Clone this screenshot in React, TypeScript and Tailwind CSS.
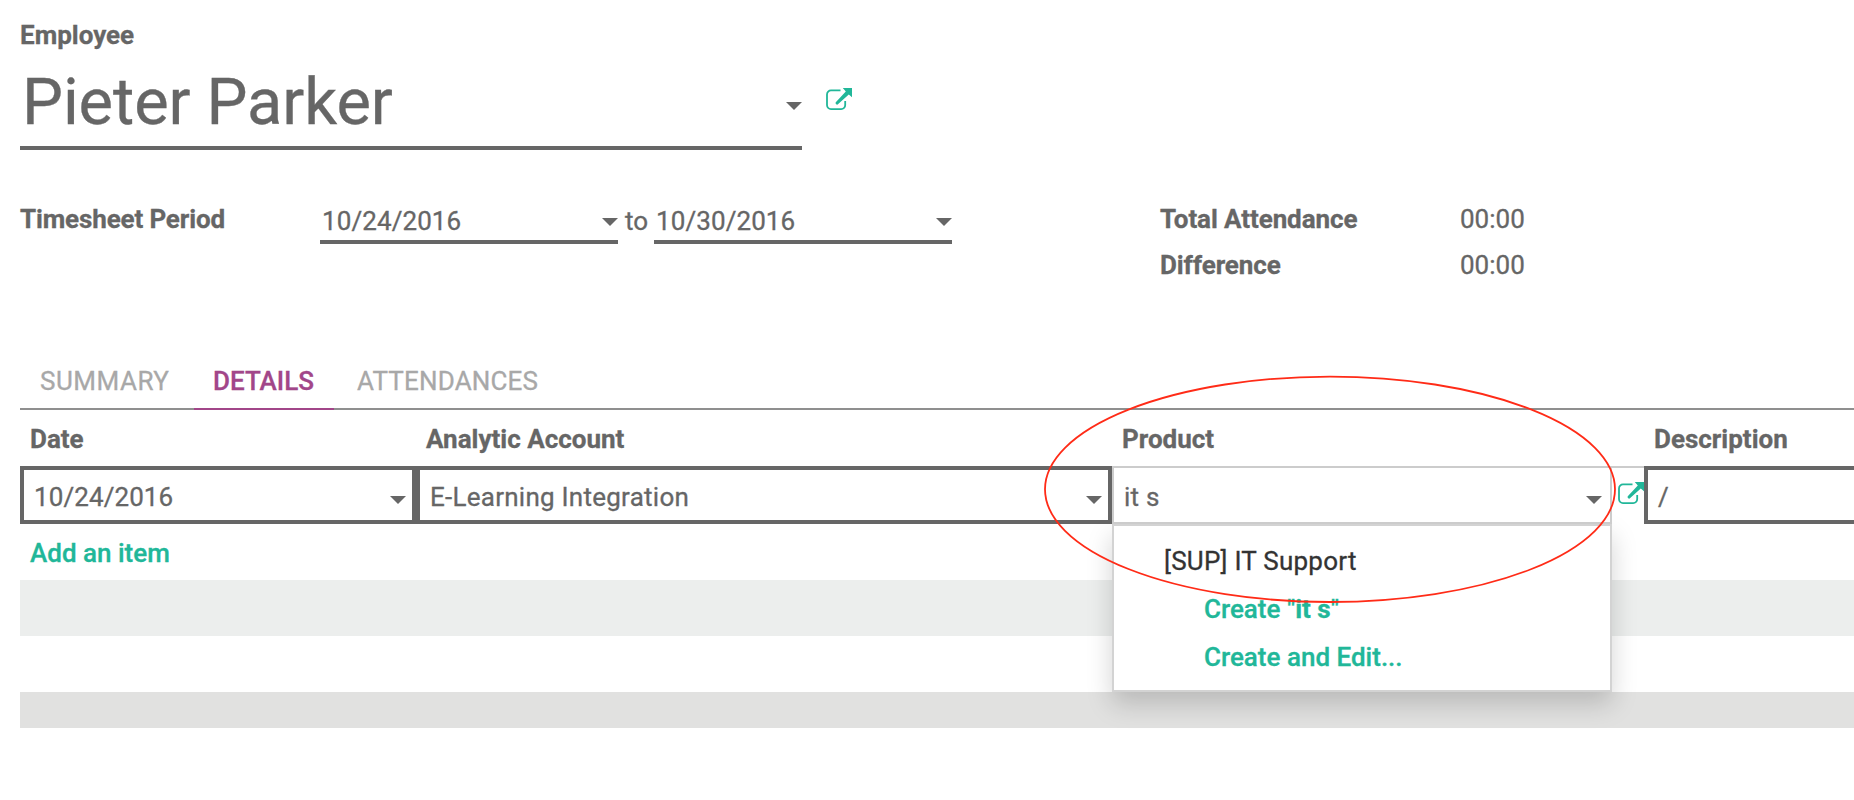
import type { ReactNode } from 'react';

function Caret() {
  return (
    <svg width="16" height="8" viewBox="0 0 16 8" className="block shrink-0 fill-[#666666]">
      <path d="M0 0H16L8 8Z" />
    </svg>
  );
}

function ExternalLink() {
  return (
    <svg width="28" height="24" viewBox="0 0 28 24" className="block shrink-0">
      <path
        d="M15.5 3.4H6a4 4 0 0 0-4 4v10.7a4 4 0 0 0 4 4h10.2a4 4 0 0 0 4-4V14"
        fill="none"
        stroke="#21b799"
        strokeWidth="1.8"
      />
      <path d="M17.8 1H27V10.2L23.8 7.4L13.2 17.1A1.5 1.5 0 0 1 11 14.9L20.8 4.4Z" fill="#21b799" />
    </svg>
  );
}

function DateField({ value }: { value: string }) {
  return (
    <div className="flex h-[41px] w-[298px] items-start justify-between border-b-4 border-[#666666] pl-0.5">
      <span className="tracking-[0.09px]">{value}</span>
      <span className="pt-[15px]">
        <Caret />
      </span>
    </div>
  );
}

function Cell({ className, children }: { className: string; children: ReactNode }) {
  return <div className={`flex h-[58px] shrink-0 items-start justify-between ${className}`}>{children}</div>;
}

export default function App() {
  return (
    <main className="relative h-[800px] w-[1854px] overflow-hidden bg-white pl-5 font-['Roboto',sans-serif] text-[26px] leading-9 text-[#666666] [-webkit-text-stroke:0.3px]">
      <section className="h-[150px] pt-[17px]">
        <div className="font-bold">Employee</div>
        <div className="flex">
          <div className="flex h-[97px] w-[782px] justify-between border-b-4 border-[#666666] pl-0.5">
            <span className="pt-[9px] text-[65px] leading-[80px] tracking-[-0.1px]">Pieter Parker</span>
            <span className="pt-[49px]">
              <Caret />
            </span>
          </div>
          <div className="pt-[34px] pl-[23px]">
            <ExternalLink />
          </div>
        </div>
      </section>

      <section className="flex h-[210px] pt-[50px]">
        <div className="w-[300px] pt-[1px] font-bold tracking-[-0.14px]">Timesheet Period</div>
        <div className="flex w-[840px] pt-[3px]">
          <DateField value="10/24/2016" />
          <span className="w-9 pl-[7px]">to</span>
          <DateField value="10/30/2016" />
        </div>
        <dl className="grid grid-cols-[300px_100px] content-start gap-y-[10px] pt-[1px]">
          <dt className="font-bold tracking-[-0.09px]">Total Attendance</dt>
          <dd>00:00</dd>
          <dt className="font-bold tracking-[-0.09px]">Difference</dt>
          <dd>00:00</dd>
        </dl>
      </section>

      <nav className="flex h-[50px] gap-1 border-b-2 border-[#8f8f8f] text-[#a8a8a8]">
        <span className="h-[50px] w-[170px] pt-[3px] pl-5 tracking-[0.5px]">SUMMARY</span>
        <span className="h-[50px] w-[140px] border-b-2 border-[#a24689] pt-[3px] pl-[19px] font-medium text-[#a24689]">
          DETAILS
        </span>
        <span className="h-[50px] pt-[3px] pl-[19px] tracking-[0.16px]">ATTENDANCES</span>
      </nav>

      <section>
        <div className="grid h-14 grid-cols-[396px_696px_532px_1fr] pt-[11px] font-bold">
          <span className="pl-[10px]">Date</span>
          <span className="pl-[10px]">Analytic Account</span>
          <span className="pl-[10px]">Product</span>
          <span className="pl-[10px]">Description</span>
        </div>
        <div className="flex h-[58px]">
          <Cell className="w-[396px] border-4 border-[#666666] pr-1.5 pl-[10px]">
            <span className="pt-[9px] tracking-[0.09px]">10/24/2016</span>
            <span className="pt-[26px]">
              <Caret />
            </span>
          </Cell>
          <Cell className="w-[696px] border-4 border-[#666666] pr-1.5 pl-[10px]">
            <span className="pt-[9px] tracking-[0.25px]">E-Learning Integration</span>
            <span className="pt-[26px]">
              <Caret />
            </span>
          </Cell>
          <div className="flex w-[532px] shrink-0 border-t-2 border-[#cccccc]">
            <div className="relative z-10 -mt-0.5">
              <Cell className="w-[500px] border-2 border-[#cccccc] bg-white pr-2 pl-[10px]">
                <span className="pt-[11px] tracking-[0.2px]">it s</span>
                <span className="pt-7">
                  <Caret />
                </span>
              </Cell>
            </div>
            <div className="-mr-1 pt-[13px] pl-[5px]">
              <ExternalLink />
            </div>
          </div>
          <Cell className="relative w-[240px] border-4 border-[#666666] bg-white pl-[10px]">
            <span className="pt-[9px]">/</span>
          </Cell>
        </div>
        <div className="h-14 pt-[11px] pl-[10px] font-medium text-[#21b799]">Add an item</div>
        <div className="h-14 bg-[#eceeed]" />
        <div className="h-14" />
        <div className="h-9 bg-[#e1e1e0]" />
      </section>

      <div className="absolute top-[524px] left-[1112px] h-[168px] w-[500px] border-2 border-[#d3d3d3] bg-white pt-[17px] shadow-[0_12px_24px_rgba(0,0,0,0.175)]">
        <div className="h-12 pl-[50px] tracking-[0.24px] text-[#333333]">[SUP] IT Support</div>
        <div className="h-12 pl-[90px] font-medium text-[#21b799]">
          Create "<b className="font-bold">it s</b>"
        </div>
        <div className="h-12 pl-[90px] font-medium text-[#21b799]">Create and Edit...</div>
      </div>

      <svg width="576" height="232" className="absolute top-[374px] left-[1042px] z-20">
        <ellipse cx="288" cy="115.3" rx="285" ry="112.7" fill="none" stroke="#ff2b17" strokeWidth="1.8" />
      </svg>
    </main>
  );
}
